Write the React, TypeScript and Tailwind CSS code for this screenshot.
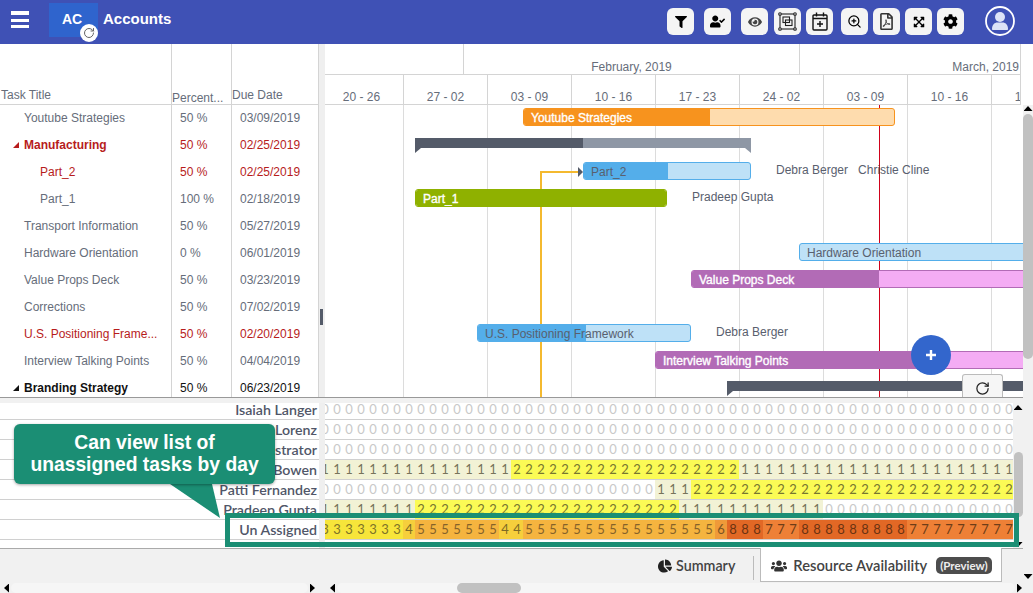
import { RotateCw, ZoomIn } from "lucide-react";
import {
  FaChartPie,
  FaCog,
  FaExpandArrowsAlt,
  FaEye,
  FaFilter,
  FaRegFilePdf,
  FaUserCheck,
  FaUsers,
} from "react-icons/fa";

const tasks = [
  { title: "Youtube Strategies", pct: "50 %", due: "03/09/2019", indent: 24 },
  { title: "Manufacturing", pct: "50 %", due: "02/25/2019", indent: 24, red: true, bold: true, parent: true },
  { title: "Part_2", pct: "50 %", due: "02/25/2019", indent: 40, red: true },
  { title: "Part_1", pct: "100 %", due: "02/18/2019", indent: 40 },
  { title: "Transport Information", pct: "50 %", due: "05/27/2019", indent: 24 },
  { title: "Hardware Orientation", pct: "0 %", due: "06/01/2019", indent: 24 },
  { title: "Value Props Deck", pct: "50 %", due: "03/23/2019", indent: 24 },
  { title: "Corrections", pct: "50 %", due: "07/02/2019", indent: 24 },
  { title: "U.S. Positioning Frame...", pct: "50 %", due: "02/20/2019", indent: 24, red: true },
  { title: "Interview Talking Points", pct: "50 %", due: "04/04/2019", indent: 24 },
  { title: "Branding Strategy", pct: "50 %", due: "06/23/2019", indent: 24, bold: true, parent: true, black: true },
];

const weeks = ["20 - 26", "27 - 02", "03 - 09", "10 - 16", "17 - 23", "24 - 02", "03 - 09", "10 - 16", "17 - 23"];

const barThemes = {
  orange: { dark: "bg-[#f7931e]", light: "bg-[#fedcae]", border: "border-[#f7931e]" },
  blue: { dark: "bg-[#54aeea]", light: "bg-[#bee1f7]", border: "border-[#54aeea]" },
  green: { dark: "bg-[#8fb100]", light: "bg-[#8fb100]", border: "border-[#8fb100]" },
  purple: { dark: "bg-[#b26bb6]", light: "bg-[#f4acf4]", border: "border-[#b26bb6]" },
};

type Bar = {
  x: number;
  end: number;
  done: number;
  theme: keyof typeof barThemes;
  label: string;
  white?: boolean;
};

function run(...parts: [number, number][]) {
  return parts.flatMap(([value, count]) => Array<number>(count).fill(value));
}

const resources = [
  { name: "Isaiah Langer", load: run([0, 58]) },
  { name: "Laura Lorenz", load: run([0, 58]) },
  { name: "Administrator", load: run([0, 58]) },
  { name: "Anne Bowen", load: run([1, 16], [2, 19], [1, 23]) },
  { name: "Patti Fernandez", load: run([0, 28], [1, 3], [2, 27]) },
  { name: "Pradeep Gupta", load: run([1, 8], [2, 22], [1, 12], [0, 16]) },
  {
    name: "Un Assigned",
    load: run([3, 7], [4, 1], [5, 7], [4, 2], [5, 16], [6, 1], [8, 3], [7, 3], [8, 9], [7, 9]),
  },
];

const loadStyles: Record<number, string> = {
  0: "bg-white text-[#c9c9c9]",
  1: "bg-[#f2f2d5] text-[#77735a]",
  2: "bg-[#fbfb55] text-[#77762f]",
  3: "bg-[#f7e53a] text-[#7d7328]",
  4: "bg-[#f6cf3c] text-[#7d6a25]",
  5: "bg-[#f5b43f] text-[#85622a]",
  6: "bg-[#ef9a39] text-[#7d5523]",
  7: "bg-[#ee8036] text-[#6e3d18]",
  8: "bg-[#e26825] text-[#6b3312]",
};

function ToolButton({ children, className = "" }: { children: React.ReactNode; className?: string }) {
  return (
    <div className={`flex h-[27px] w-[27px] items-center justify-center rounded-[6px] bg-[#f4f4f4] text-black ${className}`}>
      {children}
    </div>
  );
}

function TaskBar({ bar }: { bar: Bar }) {
  const theme = barThemes[bar.theme];
  return (
    <div
      className={`relative h-[18px] shrink-0 overflow-hidden rounded-[3px] border ${theme.border} ${theme.light}`}
      style={{ marginLeft: bar.x, width: bar.end - bar.x }}
    >
      <div className={`h-full ${theme.dark}`} style={{ width: bar.done }} />
      <span
        className={`absolute left-[7px] top-px whitespace-nowrap text-[12px] leading-[16px] ${
          bar.white ? "text-white [-webkit-text-stroke:0.35px_white]" : "text-[#59606e]"
        }`}
      >
        {bar.label}
      </span>
    </div>
  );
}

function SummaryBar({ x, end, done, tabbed }: { x: number; end: number; done: number; tabbed?: boolean }) {
  return (
    <div className="relative h-[15px] shrink-0" style={{ marginLeft: x, width: end - x }}>
      <div className="flex h-[10px]">
        <div className="h-full bg-[#545b69]" style={{ width: done }} />
        <div className={`h-full flex-1 ${tabbed ? "bg-[#545b69]" : "bg-[#8e97a5]"}`} />
      </div>
      <div className="h-[5px] w-[6px] bg-[#545b69] [clip-path:polygon(0_0,100%_0,0_100%)]" />
      {!tabbed && (
        <div className="absolute right-0 top-[10px] h-[5px] w-[6px] bg-[#8e97a5] [clip-path:polygon(0_0,100%_0,100%_100%)]" />
      )}
    </div>
  );
}

function Note({ gap, children }: { gap: number; children: string }) {
  return (
    <span className="shrink-0 whitespace-nowrap text-[12px] leading-[16px] text-[#59606e]" style={{ marginLeft: gap }}>
      {children}
    </span>
  );
}

function Arrow({ dir, className = "" }: { dir: "up" | "down" | "left" | "right"; className?: string }) {
  const shapes = {
    up: "h-[5px] w-[9px] [clip-path:polygon(50%_0,100%_100%,0_100%)]",
    down: "h-[5px] w-[9px] [clip-path:polygon(0_0,100%_0,50%_100%)]",
    left: "h-[9px] w-[5px] [clip-path:polygon(100%_0,100%_100%,0_50%)]",
    right: "h-[9px] w-[5px] [clip-path:polygon(0_0,100%_50%,0_100%)]",
  };
  return <div className={`shrink-0 bg-black ${shapes[dir]} ${className}`} />;
}

export default function App() {
  return (
    <div className="relative h-[593px] w-[1033px] overflow-hidden bg-[#f1f1f1] font-['Liberation_Sans',Arial,sans-serif]">
      {/* Top bar */}
      <header className="flex h-[44px] items-start bg-[#3f51b5]">
        <div className="ml-[11px] mt-[11px] flex h-[17px] w-[18px] flex-col justify-between">
          <div className="h-[4px] bg-white" />
          <div className="h-[3px] bg-white" />
          <div className="h-[3px] bg-white" />
        </div>
        <div className="relative ml-[20px] mt-[3px] h-[34px] w-[49px] bg-[#2f64cd] pl-[13px] pt-[7px] text-[14px] font-bold leading-[18px] text-white">
          AC
          <div className="absolute left-[31px] top-[21px] flex h-[18px] w-[18px] items-center justify-center rounded-full bg-white">
            <RotateCw size={12} strokeWidth={2} className="text-[#666]" />
          </div>
        </div>
        <div className="ml-[5px] mt-[10px] text-[15px] font-bold leading-[18px] text-white">Accounts</div>

        <div className="ml-auto mt-[8px] flex items-start">
          <ToolButton><FaFilter size={12} /></ToolButton>
          <ToolButton className="ml-[10px]"><FaUserCheck size={15} /></ToolButton>
          <ToolButton className="ml-[10px]"><FaEye size={14} className="text-[#444]" /></ToolButton>
          <ToolButton className="ml-[6px]">
            <svg width="19" height="19" viewBox="0 0 19 19" fill="none" stroke="#222" strokeWidth="1.1">
              <rect x="2" y="2" width="15" height="15" />
              <rect x="5" y="5" width="6.5" height="5.5" />
              <rect x="7.5" y="8" width="6.5" height="5.5" />
              <circle cx="2" cy="2" r="1.3" fill="#f4f4f4" />
              <circle cx="17" cy="2" r="1.3" fill="#f4f4f4" />
              <circle cx="2" cy="17" r="1.3" fill="#f4f4f4" />
              <circle cx="17" cy="17" r="1.3" fill="#f4f4f4" />
            </svg>
          </ToolButton>
          <ToolButton className="ml-[5px]">
            <svg width="16" height="19" viewBox="0 0 16 19" fill="none" stroke="#111" strokeWidth="1.4">
              <rect x="1" y="3" width="14" height="15" rx="1" />
              <path d="M1 6.5h14M4.5 0.5v4M11.5 0.5v4M8 9v6M5 12h6" />
            </svg>
          </ToolButton>
          <ToolButton className="ml-[8px]"><ZoomIn size={15} strokeWidth={2} /></ToolButton>
          <ToolButton className="ml-[5px]"><FaRegFilePdf size={17} className="text-[#333]" /></ToolButton>
          <ToolButton className="ml-[5px]"><FaExpandArrowsAlt size={12} /></ToolButton>
          <ToolButton className="ml-[5px]"><FaCog size={15} /></ToolButton>
          <svg className="-mt-[2px] ml-[21px] mr-[18px]" width="30" height="30" viewBox="0 0 30 30" fill="none">
            <circle cx="15" cy="15" r="14" stroke="white" strokeWidth="1.8" />
            <circle cx="15" cy="11" r="5" fill="#dde3f7" />
            <path d="M7 23c0-4.5 3-6.5 5-6.5h6c2 0 5 2 5 6.5 0 .8-.4 1-1 1H8c-.6 0-1-.2-1-1z" fill="#dde3f7" />
          </svg>
        </div>
      </header>

      <div className="flex">
        <main className="w-[1023px]">
          {/* Task table and chart */}
          <section className="flex h-[354px] overflow-hidden border-b border-[#999] bg-white">
            <div className="w-[319px] shrink-0 text-[12px] text-[#666d7a]">
              <div className="grid h-[61px] grid-cols-[172px_60px_87px] border-b border-[#d4d4d4]">
                <div className="flex items-end border-r border-[#d4d4d4] pl-[1px]">Task Title</div>
                <div className="flex items-end overflow-hidden whitespace-nowrap border-r border-[#d4d4d4] leading-[12px]">Percent...</div>
                <div className="flex items-end border-r border-[#d4d4d4]">Due Date</div>
              </div>
              {tasks.map((task) => {
                const color = task.red ? "text-[#b71c1c]" : task.black ? "text-[#111]" : "";
                return (
                  <div key={task.title} className={`grid h-[27px] grid-cols-[172px_60px_87px] ${color}`}>
                    <div
                      className={`relative flex items-center whitespace-nowrap border-r border-[#d4d4d4] pb-[2px] ${task.bold ? "font-bold" : ""}`}
                      style={{ paddingLeft: task.indent }}
                    >
                      {task.parent && (
                        <div className={`absolute left-[13px] top-[10px] h-[6px] w-[6px] [clip-path:polygon(100%_0,100%_100%,0_100%)] ${task.red ? "bg-[#b71c1c]" : "bg-[#111]"}`} />
                      )}
                      {task.title}
                    </div>
                    <div className="flex items-center border-r border-[#d4d4d4] pb-[2px] pl-[8px]">{task.pct}</div>
                    <div className="flex items-center border-r border-[#d4d4d4] pb-[2px] pl-[8px]">{task.due}</div>
                  </div>
                );
              })}
            </div>

            <div className="flex w-[6px] shrink-0 items-start bg-[#efefef] pl-[1px] pt-[265px]">
              <div className="h-[16px] w-[3px] bg-[#545b69]" />
            </div>

            <div className="w-[698px] shrink-0 overflow-hidden">
              <div className="h-[61px] w-[696px] overflow-hidden border-b border-r border-[#d4d4d4] text-[12px] leading-[12px] text-[#666d7a]">
                <div className="flex h-[31px] border-b border-[#d4d4d4]">
                  <div className="w-[139px] shrink-0 border-r border-[#d4d4d4]" />
                  <div className="flex w-[336px] shrink-0 items-end justify-center border-r border-[#d4d4d4] pb-[1px]">February, 2019</div>
                  <div className="flex flex-1 items-end justify-end pb-[1px] pr-[1px]">March, 2019</div>
                </div>
                <div className="-ml-[5px] flex h-[29px]">
                  {weeks.map((week, i) => (
                    <div key={i} className="flex w-[84px] shrink-0 items-end justify-center border-r border-[#d4d4d4] pb-[1px]">
                      {week}
                    </div>
                  ))}
                </div>
              </div>

              <div className="relative h-[292px]">
                <div className="absolute inset-0 -ml-[5px] flex">
                  {weeks.map((_, i) => (
                    <div key={i} className="w-[84px] shrink-0 border-r border-[#dcdcdc]" />
                  ))}
                </div>
                {/* Today line and dependency connector stay under the bars */}
                <div className="absolute bottom-0 left-[554px] top-0 w-px bg-[#d0021b]" />
                <div className="absolute bottom-0 left-[215px] top-[66px] w-[2px] bg-[#f4b92f]" />
                <div className="absolute left-[215px] top-[66px] h-[2px] w-[39px] bg-[#f4b92f]" />
                <div className="absolute left-[253px] top-[62px] h-[10px] w-[5px] bg-[#545b69] [clip-path:polygon(0_0,100%_50%,0_100%)]" />

                <div className="relative h-[27px] pt-[3px]">
                  <TaskBar bar={{ x: 198, end: 570, done: 186, theme: "orange", label: "Youtube Strategies", white: true }} />
                </div>
                <div className="relative h-[27px] pt-[6px]">
                  <SummaryBar x={90} end={426} done={168} />
                </div>
                <div className="relative flex h-[27px] items-start pt-[3px]">
                  <TaskBar bar={{ x: 258, end: 426, done: 84, theme: "blue", label: "Part_2" }} />
                  <Note gap={25}>Debra Berger</Note>
                  <Note gap={10}>Christie Cline</Note>
                </div>
                <div className="relative flex h-[27px] items-start pt-[3px]">
                  <TaskBar bar={{ x: 90, end: 342, done: 252, theme: "green", label: "Part_1", white: true }} />
                  <Note gap={25}>Pradeep Gupta</Note>
                </div>
                <div className="h-[27px]" />
                <div className="relative h-[27px] pt-[3px]">
                  <TaskBar bar={{ x: 474, end: 710, done: 0, theme: "blue", label: "Hardware Orientation" }} />
                </div>
                <div className="relative h-[27px] pt-[3px]">
                  <TaskBar bar={{ x: 366, end: 710, done: 187, theme: "purple", label: "Value Props Deck", white: true }} />
                </div>
                <div className="h-[27px]" />
                <div className="relative flex h-[27px] items-start pt-[3px]">
                  <TaskBar bar={{ x: 152, end: 366, done: 108, theme: "blue", label: "U.S. Positioning Framework" }} />
                  <Note gap={25}>Debra Berger</Note>
                </div>
                <div className="relative h-[27px] pt-[3px]">
                  <TaskBar bar={{ x: 330, end: 710, done: 270, theme: "purple", label: "Interview Talking Points", white: true }} />
                </div>
                <div className="relative h-[27px] pt-[6px]">
                  <SummaryBar x={402} end={710} done={308} tabbed />
                </div>

                <div className="absolute left-[586px] top-[230px] flex h-[40px] w-[40px] items-center justify-center rounded-full bg-[#3366cc] text-white">
                  <svg width="10" height="10" viewBox="0 0 10 10" fill="white">
                    <path d="M3.8 0h2.4v3.8H10v2.4H6.2V10H3.8V6.2H0V3.8h3.8z" />
                  </svg>
                </div>
                <div className="absolute left-[637px] top-[269px] flex h-[24px] w-[41px] items-start justify-center rounded-t-[3px] border border-b-0 border-[#bbb] bg-[#f6f6f6] pt-[6px]">
                  <RotateCw size={15} strokeWidth={2} className="text-[#222]" />
                </div>
              </div>
            </div>
          </section>

          <div className="h-[5px]" />

          {/* Resource availability */}
          <section className="flex h-[146px] border-b border-[#aaa] bg-white font-['Lato',sans-serif]">
            <div className="h-[145px] w-[319px] shrink-0 overflow-hidden">
              <div className="-mt-[3px]">
                {resources.map((r) => (
                  <div key={r.name} className="h-[20px] border-b border-[#d0d0d0] pr-[2px] text-right text-[14.2px] font-semibold leading-[20px] text-[#505668]">
                    {r.name}
                  </div>
                ))}
              </div>
            </div>
            <div className="w-[6px] shrink-0 bg-[#efefef]" />
            <div className="h-[145px] w-[688px] shrink-0 overflow-hidden">
              <div className="-mt-[3px]">
                {resources.map((r) => (
                  <div key={r.name} className="-ml-[6px] flex h-[20px] border-b border-[#d0d0d0]">
                    {r.load.map((value, i) => (
                      <div key={i} className={`h-[19px] w-[12px] shrink-0 text-center text-[13px] leading-[19px] ${loadStyles[value]}`}>
                        {value}
                      </div>
                    ))}
                  </div>
                ))}
              </div>
            </div>
            <div className="flex w-[10px] shrink-0 flex-col items-center bg-[#f1f1f1] pt-[2px]">
              <Arrow dir="up" />
              <div className="mt-[42px] h-[65px] w-[9px] rounded-[5px] bg-[#c1c1c1]" />
              <Arrow dir="down" className="mt-[25px]" />
            </div>
          </section>

          {/* Tabs */}
          <div className="flex h-[34px] items-start font-['Lato',sans-serif] text-[14.3px] text-[#444]">
            <FaChartPie size={14} className="ml-[658px] mt-[10px] text-[#222]" />
            <span className="ml-[4px] mt-[8px] font-semibold leading-[18px]">Summary</span>
            <div className="ml-[18px] mt-[7px] h-[24px] w-px bg-[#bbb]" />
            <div className="-mt-px ml-[6px] flex h-[34px] w-[242px] items-center border-x border-b border-[#bbb] bg-white pl-[10px] pt-[2px]">
              <FaUsers size={16} className="text-[#333]" />
              <span className="ml-[6px] text-[14.7px] font-semibold">Resource Availability</span>
              <span className="ml-[9px] rounded-[5px] bg-[#4d4d4d] px-[4px] text-[11.5px] font-bold leading-[17px] text-[#eee]">(Preview)</span>
            </div>
          </div>

          {/* Horizontal scrollbars */}
          <div className="flex h-[10px] items-center">
            <Arrow dir="left" className="ml-[4px]" />
            <div className="ml-[2px] h-[10px] w-[297px] rounded-[5px] bg-[#f6f6f6]" />
            <Arrow dir="right" className="ml-[2px]" />
            <Arrow dir="left" className="ml-[15px]" />
            <div className="ml-[2px] flex h-[10px] w-[678px] rounded-[5px] bg-[#f6f6f6] pl-[120px]">
              <div className="h-[10px] w-[64px] rounded-[5px] bg-[#c1c1c1]" />
            </div>
            <Arrow dir="right" className="ml-[2px]" />
          </div>
        </main>

        {/* Page scrollbar */}
        <aside className="flex w-[10px] shrink-0 flex-col items-center">
          <div className="h-[61px] w-full bg-white" />
          <Arrow dir="up" className="mt-[1px]" />
          <div className="mt-[3px] h-[245px] w-[10px] rounded-[5px] bg-[#c1c1c1]" />
          <Arrow dir="down" className="mt-[215px]" />
        </aside>
      </div>

      {/* Annotation overlay */}
      <div className="absolute left-[225px] top-[513px] h-[34px] w-[794px] border-[5px] border-[#1b8e74]" />
      <svg className="absolute left-[165px] top-[480px]" width="60" height="40" viewBox="0 0 60 40">
        <polygon points="5,4 47,4 55,38" fill="#1b8e74" />
      </svg>
      <div className="absolute left-[14px] top-[424px] flex h-[60px] w-[261px] flex-col items-center justify-center rounded-[6px] bg-[#1b8e74] text-[19.3px] font-bold leading-[22px] text-white shadow-[0_1px_3px_rgba(0,0,0,0.35)]">
        <span>Can view list of</span>
        <span>unassigned tasks by day</span>
      </div>
    </div>
  );
}
